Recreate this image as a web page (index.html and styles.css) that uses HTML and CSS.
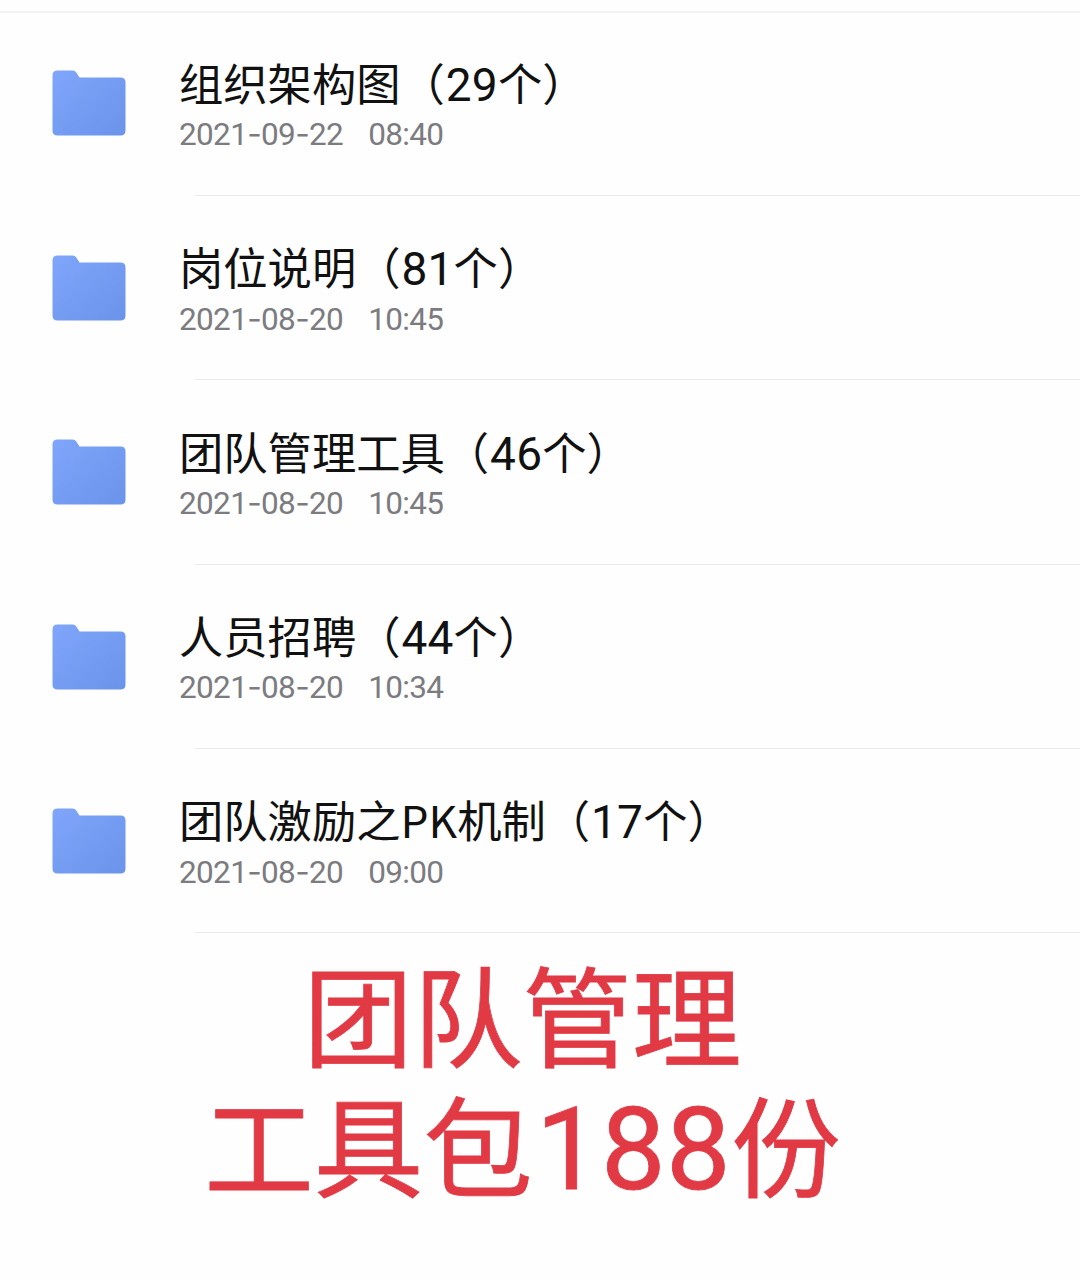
FILE: index.html
```html
<!DOCTYPE html>
<html lang="zh-CN">
<head>
<meta charset="utf-8">
<title>团队管理工具包</title>
<link rel="stylesheet" href="styles.css">
</head>
<body>
<svg width="0" height="0" class="defs" aria-hidden="true">
  <defs>
    <linearGradient id="blue" x1="0" y1="0" x2="1" y2="1">
      <stop offset="0" stop-color="#7fa6fa"/>
      <stop offset="1" stop-color="#6a93ea"/>
    </linearGradient>
    <symbol id="folder" viewBox="0 0 74 66">
      <path fill="url(#blue)" d="M5 0.5H20.500Q23 0.500 24.300 2.500L27.500 7.500H68.500Q73.500 7.500 73.500 12.500V60.500Q73.500 65.500 68.500 65.500H5.500Q0.500 65.500 0.500 60.500V5.500Q0.500 0.500 5.500 0.500Z"/>
    </symbol>
  </defs>
</svg>
<main class="page">
  <ul class="list">
    <li class="row">
      <svg class="folder"><use href="#folder"/></svg>
      <div class="info">
        <div class="name">组织架构图（<span class="num">29</span>个）</div>
        <div class="meta"><span>2021<i>-</i>09<i>-</i>22</span><span>08:40</span></div>
      </div>
    </li>
    <li class="row">
      <svg class="folder"><use href="#folder"/></svg>
      <div class="info">
        <div class="name">岗位说明（<span class="num">81</span>个）</div>
        <div class="meta"><span>2021<i>-</i>08<i>-</i>20</span><span>10:45</span></div>
      </div>
    </li>
    <li class="row">
      <svg class="folder"><use href="#folder"/></svg>
      <div class="info">
        <div class="name">团队管理工具（<span class="num">46</span>个）</div>
        <div class="meta"><span>2021<i>-</i>08<i>-</i>20</span><span>10:45</span></div>
      </div>
    </li>
    <li class="row">
      <svg class="folder"><use href="#folder"/></svg>
      <div class="info">
        <div class="name">人员招聘（<span class="num">44</span>个）</div>
        <div class="meta"><span>2021<i>-</i>08<i>-</i>20</span><span>10:34</span></div>
      </div>
    </li>
    <li class="row">
      <svg class="folder"><use href="#folder"/></svg>
      <div class="info">
        <div class="name">团队激励之PK机制（<span class="num">17</span>个）</div>
        <div class="meta"><span>2021<i>-</i>08<i>-</i>20</span><span>09:00</span></div>
      </div>
    </li>
  </ul>
  <h1 class="caption"><span>团队管理</span><span>工具包<span class="big-num">188</span>份</span></h1>
</main>
</body>
</html>
```
FILE: styles.css
```css
* { box-sizing: border-box; }
body {
  margin: 0;
  background: #fefefe;
  font-family: "Noto Sans CJK SC", sans-serif;
}
.defs { display: block; height: 0; }
.page {
  height: 1280px;
  padding-top: 11px;
  overflow: hidden;
}
.list {
  margin: 0;
  padding: 0;
  list-style: none;
  border-top: 2px solid #f2f2f3;
}
.row {
  display: flex;
  height: 184.4px;
  padding-left: 52px;
}
.row:first-child { height: 182.8px; }
.row:first-child .folder { margin-top: 57.400px; }
.row:first-child .info { padding-top: 40.800px; }
.folder {
  flex: none;
  width: 74px;
  height: 66px;
  margin-top: 59px;
}
.info {
  flex: 1;
  margin-left: 53px;
  padding-top: 42.400px;
  background: linear-gradient(#ececed, #ececed) 16px 100% / 100% 1px no-repeat;
}
.name {
  height: 60.500px;
  line-height: 56px;
  font-size: 44.3px;
  color: #111;
  white-space: nowrap;
}
.num {
  margin-left: 1px;
  font-family: Roboto, sans-serif;
  font-size: 46px;
  line-height: 1;
  letter-spacing: 0.2px;
}
.meta {
  display: flex;
  align-items: baseline;
  gap: 25px;
  height: 42px;
  line-height: 42px;
  font-family: Roboto, sans-serif;
  font-size: 31.500px;
  letter-spacing: -0.650px;
  color: #7b7b80;
}
.meta i {
  font-family: Inter, sans-serif;
  font-style: normal;
  line-height: 1;
}
.caption {
  display: flex;
  flex-direction: column;
  align-items: center;
  margin: 14px 35px 0 0;
  font-size: 109.500px;
  font-weight: 400;
  line-height: 129.500px;
  color: #e13a45;
  -webkit-text-stroke: 0.8px #e13a45;
}
.big-num {
  margin-left: 3px;
  font-family: Roboto, sans-serif;
  font-size: 115px;
  line-height: 1;
  letter-spacing: 0.500px;
}
```
